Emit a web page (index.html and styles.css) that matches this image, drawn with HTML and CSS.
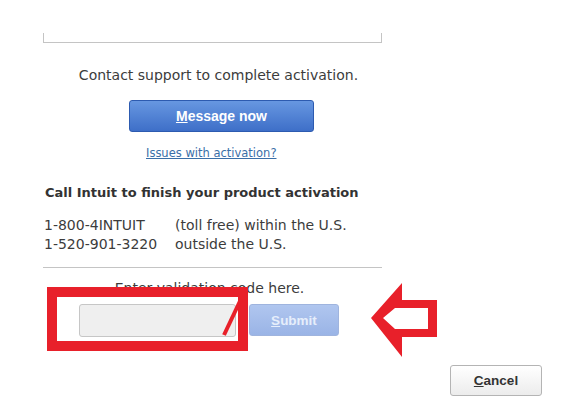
FILE: index.html
```html
<!DOCTYPE html>
<html lang="en">
<head>
	<meta charset="UTF-8">
	<title>Activation</title>
	<link rel="stylesheet" href="styles.css">
</head>
<body>

	<div id="page">
		<div id="panel">
			<div class="box-end"></div>

			<p class="contact">Contact support to complete activation.</p>
			<div class="msg-row">
				<button class="btn-blue"><u>M</u>essage now</button>
			</div>
			<p class="link-row"><a href="#" class="issues">Issues with activation?</a></p>

			<h3 class="call">Call Intuit to finish your product activation</h3>
			<table class="phones">
				<tr><td class="num">1-800-4INTUIT</td><td>(toll free) within the U.S.</td></tr>
				<tr><td class="num">1-520-901-3220</td><td>outside the U.S.</td></tr>
			</table>

			<div class="rule"></div>

			<p class="enter">Enter validation code here.</p>
			<div class="code-row">
				<input type="text" class="code">
				<button class="btn-submit" disabled><u>S</u>ubmit</button>
			</div>
		</div>

		<div class="footer">
			<button class="btn-cancel"><u>C</u>ancel</button>
		</div>

		<!-- red annotations drawn over the screenshot -->
		<svg class="mark-box" width="203" height="66" viewBox="0 0 203 66">
			<rect x="5" y="5" width="191" height="54" fill="none" stroke="#e8202a" stroke-width="10"/>
			<line x1="194" y1="12" x2="177" y2="48" stroke="#e8202a" stroke-width="4"/>
		</svg>
		<svg class="mark-arrow" width="74" height="80" viewBox="0 0 74 80">
			<path d="M4 38 L35 3 L35 20 L70 20 L70 57 L35 57 L35 77 Z M16 38 L28 28 L61 28 L61 49 L28 49 Z" fill="#e8202a" fill-rule="evenodd"/>
		</svg>
	</div>

</body>
</html>
```

FILE: styles.css
```css
*{
	margin: 0;
	padding: 0;
}
body{
	background: #fff;
	font-family: "DejaVu Sans", Verdana, sans-serif;
	font-size: 14px;
	color: #3c3c3c;
}
#page{
	position: relative;
	width: 565px;
	height: 400px;
	overflow: hidden;
}
#panel{
	width: 339px;
	margin-left: 43px;
}
.box-end{
	height: 9px;
	margin-top: 33px;
	border: 1px solid #c4c4c4;
	border-top: none;
}
.contact{
	margin-top: 23px;
	text-align: center;
	line-height: 18px;
	padding-left: 12px;
}
.msg-row{
	padding-left: 86px;
}
.btn-blue{
	width: 185px;
	height: 32px;
	margin-top: 16px;
	border: 1px solid #2d5bb0;
	border-radius: 3px;
	background: linear-gradient(#6797e1, #3e6fc8);
	color: #fff;
	font-family: "Liberation Sans", Arial, sans-serif;
	font-weight: bold;
	font-size: 14px;
	cursor: pointer;
}
.link-row{
	padding-left: 103px;
}
.issues{
	display: inline-block;
	margin-top: 14px;
	font-size: 11.5px;
	color: #3a6fa8;
	line-height: 14px;
}
.call{
	margin-top: 24px;
	margin-left: 2px;
	font-size: 13px;
	color: #333;
	line-height: 18px;
}
.phones{
	margin-top: 14px;
	margin-left: 1px;
	border-collapse: collapse;
	line-height: 19px;
}
.phones td{
	padding: 0;
}
.phones .num{
	width: 131px;
}
.rule{
	height: 1px;
	margin-top: 13px;
	background: #c4c4c4;
}
.enter{
	margin-top: 12px;
	text-align: center;
	line-height: 16px;
	padding-right: 6px;
}
.code-row{
	display: flex;
	gap: 13px;
	margin-top: 8px;
	padding-left: 36px;
}
.code{
	width: 157px;
	height: 33px;
	border: 1px solid #c6c6c6;
	border-radius: 3px;
	background: #efefef;
	box-sizing: border-box;
}
.btn-submit{
	width: 90px;
	height: 32px;
	border: 1px solid #9fb4de;
	border-radius: 3px;
	background: linear-gradient(#b0c6ef, #9ab4e6);
	color: #e6eefb;
	font-family: "Liberation Sans", Arial, sans-serif;
	font-weight: bold;
	font-size: 13.5px;
}
.footer{
	display: flex;
	justify-content: flex-end;
	margin-top: 28px;
	padding-right: 23px;
}
.btn-cancel{
	width: 92px;
	height: 31px;
	border: 1px solid #b4b4b4;
	border-radius: 3px;
	background: linear-gradient(#ffffff, #ececec);
	color: #333;
	font-family: "Liberation Sans", Arial, sans-serif;
	font-weight: bold;
	font-size: 13.5px;
}
.mark-box{
	position: absolute;
	left: 47px;
	top: 287px;
}
.mark-arrow{
	position: absolute;
	left: 367px;
	top: 280px;
}
```
